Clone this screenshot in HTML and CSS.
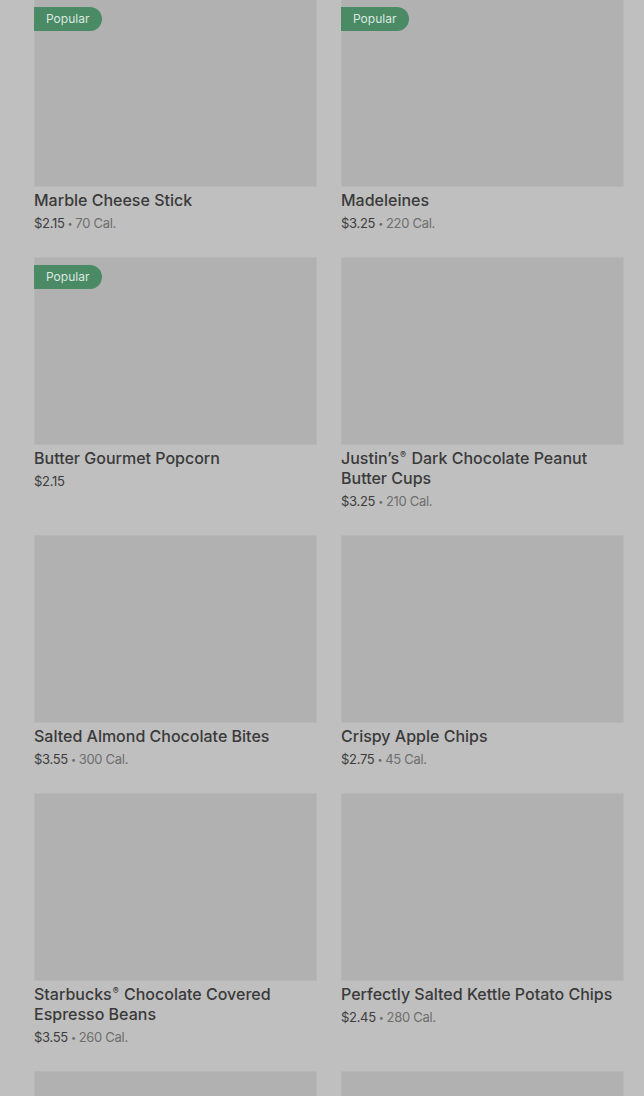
FILE: index.html
```html
<!DOCTYPE html>
<html lang="en">
<head>
<meta charset="utf-8">
<link rel="stylesheet" href="styles.css">
</head>
<body>
<main class="grid">
  <div class="card">
    <div class="thumb"><span class="badge">Popular</span></div>
    <div class="title">Marble Cheese Stick</div>
    <div class="meta"><span class="price">$2.15</span><span class="dot">•</span><span class="cal">70 Cal.</span></div>
  </div>
  <div class="card">
    <div class="thumb"><span class="badge">Popular</span></div>
    <div class="title">Madeleines</div>
    <div class="meta"><span class="price">$3.25</span><span class="dot">•</span><span class="cal">220 Cal.</span></div>
  </div>
  <div class="card">
    <div class="thumb"><span class="badge">Popular</span></div>
    <div class="title">Butter Gourmet Popcorn</div>
    <div class="meta"><span class="price">$2.15</span></div>
  </div>
  <div class="card">
    <div class="thumb"></div>
    <div class="title">Justin’s<span class="reg">®</span> Dark Chocolate Peanut Butter Cups</div>
    <div class="meta"><span class="price">$3.25</span><span class="dot">•</span><span class="cal">210 Cal.</span></div>
  </div>
  <div class="card">
    <div class="thumb"></div>
    <div class="title">Salted Almond Chocolate Bites</div>
    <div class="meta"><span class="price">$3.55</span><span class="dot">•</span><span class="cal">300 Cal.</span></div>
  </div>
  <div class="card">
    <div class="thumb"></div>
    <div class="title">Crispy Apple Chips</div>
    <div class="meta"><span class="price">$2.75</span><span class="dot">•</span><span class="cal">45 Cal.</span></div>
  </div>
  <div class="card">
    <div class="thumb"></div>
    <div class="title">Starbucks<span class="reg">®</span> Chocolate Covered Espresso Beans</div>
    <div class="meta"><span class="price">$3.55</span><span class="dot">•</span><span class="cal">260 Cal.</span></div>
  </div>
  <div class="card">
    <div class="thumb"></div>
    <div class="title">Perfectly Salted Kettle Potato Chips</div>
    <div class="meta"><span class="price">$2.45</span><span class="dot">•</span><span class="cal">280 Cal.</span></div>
  </div>
  <div class="card">
    <div class="thumb"></div>
  </div>
  <div class="card">
    <div class="thumb"></div>
  </div>
</main>
</body>
</html>
```

FILE: styles.css
```css
html, body {
  margin: 0;
  padding: 0;
  background: #bfbfbf;
  overflow: hidden;
  height: 1096px;
}
body {
  font-family: Inter, "Noto Sans", sans-serif;
  color: #3a3a3a;
}
.grid {
  display: grid;
  grid-template-columns: 283px 283px;
  column-gap: 24px;
  row-gap: 24px;
  padding: 0 20px 0 34px;
  margin-top: -1px;
}
.card {
  display: flex;
  flex-direction: column;
}
.thumb {
  position: relative;
  height: 186px;
  background: #b1b1b1;
  border: 1px solid #b7b7b7;
}
.badge {
  position: absolute;
  top: 7px;
  left: -1px;
  height: 24px;
  line-height: 24px;
  padding: 0 13px 0 12px;
  background: #4a8a64;
  color: #dde8e1;
  font-size: 12px;
  border-radius: 0 12px 12px 0;
}
.title {
  margin-top: 3px;
  height: auto;
  font-size: 16px;
  font-weight: 500;
  line-height: 20px;
  color: #3a3a3a;
}
.reg {
  font-size: 9px;
  line-height: 0;
  vertical-align: 6px;
  margin: 0 1px;
}
.meta {
  margin-top: 3px;
  font-size: 13px;
  line-height: 20px;
  color: #6e6e6e;
  letter-spacing: -0.3px;
}
.price {
  color: #3d3d3d;
}
.dot {
  font-size: 9px;
  line-height: 0;
  margin: 0 3px;
  vertical-align: 1px;
  color: #6e6e6e;
}
.cal {
  color: #6e6e6e;
}
```
